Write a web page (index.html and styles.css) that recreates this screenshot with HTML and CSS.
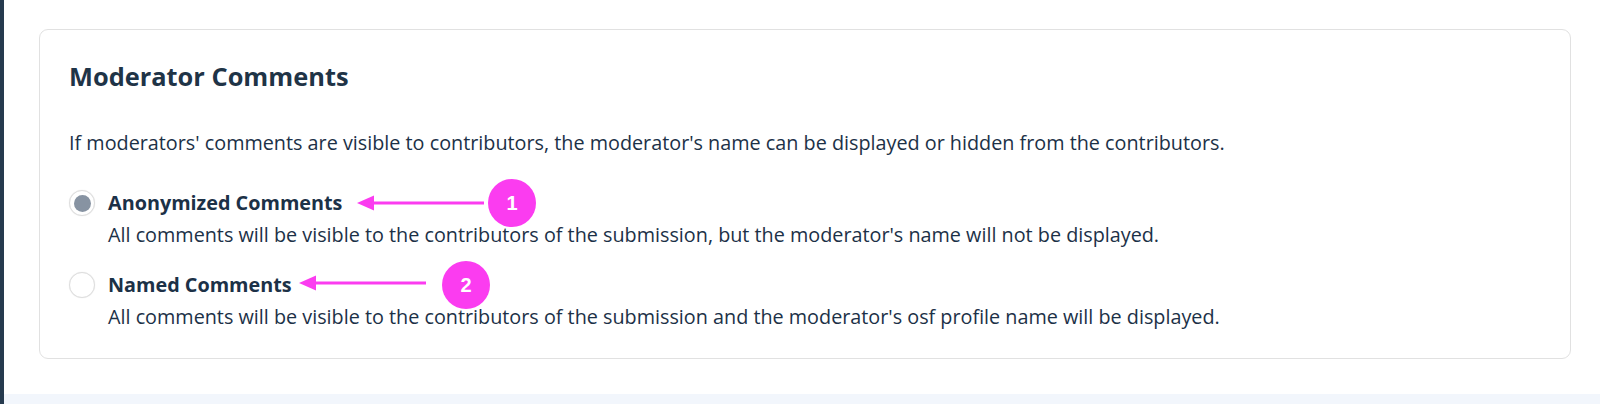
FILE: index.html
```html
<!DOCTYPE html>
<html lang="en">
<head>
<meta charset="utf-8">
<title>Moderator Comments</title>
<link rel="stylesheet" href="styles.css">
</head>
<body>
<div class="page">
  <div class="side-bar"></div>
  <main class="main">
    <div class="content">
      <section class="card">
        <h2 class="card-title">Moderator Comments</h2>
        <p class="card-intro">If moderators' comments are visible to contributors, the moderator's name can be displayed or hidden from the contributors.</p>
        <div class="options">
          <label class="option">
            <span class="radio radio-checked"><span class="radio-dot"></span></span>
            <span class="option-text">
              <span class="option-label">Anonymized Comments</span>
              <span class="option-desc">All comments will be visible to the contributors of the submission, but the moderator's name will not be displayed.</span>
            </span>
          </label>
          <label class="option option-second">
            <span class="radio"></span>
            <span class="option-text">
              <span class="option-label">Named Comments</span>
              <span class="option-desc">All comments will be visible to the contributors of the submission and the moderator's osf profile name will be displayed.</span>
            </span>
          </label>
        </div>
        <svg class="callout-arrow arrow-1" width="127" height="16" viewBox="0 0 127 16"><polygon points="0,8 17,0.5 17,15.5" fill="#fb3cf0"/><line x1="14" y1="8" x2="127" y2="8" stroke="#fb3cf0" stroke-width="3"/></svg>
        <span class="callout-badge badge-1">1</span>
        <svg class="callout-arrow arrow-2" width="127" height="16" viewBox="0 0 127 16"><polygon points="0,8 17,0.5 17,15.5" fill="#fb3cf0"/><line x1="14" y1="8" x2="127" y2="8" stroke="#fb3cf0" stroke-width="3"/></svg>
        <span class="callout-badge badge-2">2</span>
      </section>
    </div>
    <div class="bottom-band"></div>
  </main>
</div>
</body>
</html>
```
FILE: styles.css
```css
* { box-sizing: border-box; }
html, body { margin: 0; padding: 0; background: #fff; }
body {
  font-family: "Open Sans", "Noto Sans", sans-serif;
  color: #1c3147;
}
.page {
  display: flex;
  height: 404px;
  overflow: hidden;
}
.side-bar {
  width: 4px;
  flex: none;
  background: #263a4e;
}
.main {
  flex: 1;
  display: flex;
  flex-direction: column;
}
.content {
  padding: 29px 29px 35px 35px;
}
.card {
  position: relative;
  border: 1px solid #e1e1e1;
  border-radius: 9px;
  height: 330px;
  padding: 30px 29px 0 29px;
  background: #fff;
}
.card-title {
  margin: 0;
  font-size: 25.4px;
  line-height: 32px;
  font-weight: 700;
  color: #1f3447;
}
.card-intro {
  margin: 37px 0 0 0;
  font-size: 19.8px;
  line-height: 28px;
  color: #1c3147;
}
.options {
  margin-top: 32px;
  display: flex;
  flex-direction: column;
  gap: 22px;
}
.option {
  display: flex;
  align-items: flex-start;
  gap: 13px;
}
.radio {
  flex: none;
  width: 26px;
  height: 26px;
  margin-top: 1px;
  border-radius: 50%;
  border: 1px solid #dedede;
  box-shadow: 0 0 1px rgba(0,0,0,0.12);
  background: #fff;
  display: flex;
  align-items: center;
  justify-content: center;
}
.radio-dot {
  width: 17px;
  height: 17px;
  border-radius: 50%;
  background: #8793a2;
}
.option-text {
  display: flex;
  flex-direction: column;
  gap: 4px;
}
.option-label {
  font-size: 19.8px;
  line-height: 28px;
  font-weight: 700;
  color: #1c3147;
}
.option-desc {
  font-size: 19.8px;
  line-height: 28px;
}
.callout-arrow {
  position: absolute;
  display: block;
}
.arrow-1 { left: 317px; top: 165px; }
.arrow-2 { left: 259px; top: 245px; }
.callout-badge {
  position: absolute;
  width: 48px;
  height: 48px;
  border-radius: 50%;
  background: #fb3cf0;
  color: #fff;
  font-family: "Liberation Sans", Arial, sans-serif;
  font-weight: 700;
  font-size: 20px;
  display: flex;
  align-items: center;
  justify-content: center;
}
.badge-1 { left: 448px; top: 149px; }
.badge-2 { left: 402px; top: 231px; }
.bottom-band {
  height: 10px;
  background: #f2f6fc;
}
```
